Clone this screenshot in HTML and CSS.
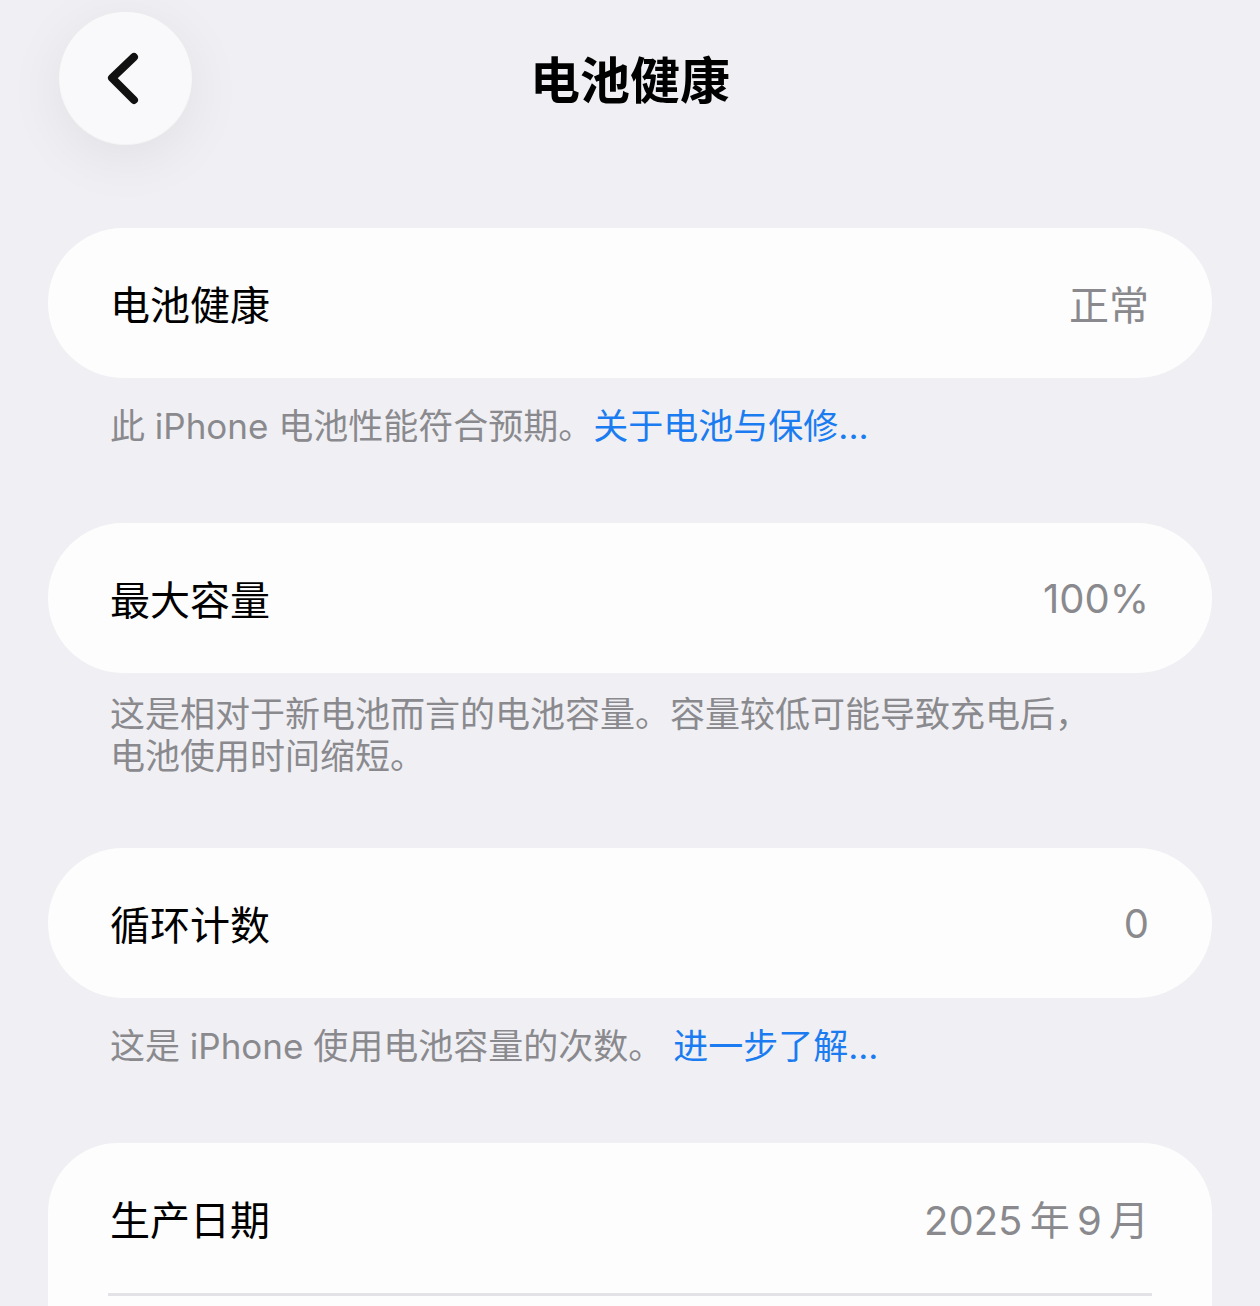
FILE: index.html
```html
<!DOCTYPE html>
<html lang="zh-CN">
<head>
<meta charset="UTF-8">
<meta name="viewport" content="width=device-width, initial-scale=1.0">
<title>电池健康</title>
<link rel="stylesheet" href="styles.css">
</head>
<body>

<div class="header">
  <button class="back" aria-label="返回">
    <svg width="40" height="58" viewBox="0 0 40 58">
      <path d="M32 7 L10 28 L32 50" fill="none" stroke="#111" stroke-width="8" stroke-linecap="round" stroke-linejoin="round"/>
    </svg>
  </button>
  <h1>电池健康</h1>
  <div class="spacer"></div>
</div>

<div class="group">
  <div class="card">
    <div class="row">
      <span class="label">电池健康</span>
      <span class="value">正常</span>
    </div>
  </div>
  <p class="footer">此 iPhone 电池性能符合预期。<a href="#">关于电池与保修...</a></p>
</div>

<div class="group">
  <div class="card">
    <div class="row">
      <span class="label">最大容量</span>
      <span class="value">100%</span>
    </div>
  </div>
  <p class="footer footer-multi">这是相对于新电池而言的电池容量。容量较低可能导致充电后，电池使用时间缩短。</p>
</div>

<div class="group">
  <div class="card">
    <div class="row">
      <span class="label">循环计数</span>
      <span class="value">0</span>
    </div>
  </div>
  <p class="footer">这是 iPhone 使用电池容量的次数。 <a href="#">进一步了解...</a></p>
</div>

<div class="group">
  <div class="card card-list">
    <div class="row">
      <span class="label">生产日期</span>
      <span class="value">2025&thinsp;年&thinsp;9&thinsp;月</span>
    </div>
    <div class="divider"></div>
    <div class="row"></div>
  </div>
</div>

</body>
</html>
```

FILE: styles.css
```css
body {
  font-family: Inter, "Noto Sans CJK SC", sans-serif;
  background-color: #f0f0f4;
  color: #000;
  margin: 0;
  padding: 0;
  overflow: hidden;
}
.header {
  display: flex;
  align-items: center;
  padding: 13px 60px 0 60px;
}
.back {
  width: 131px;
  height: 131px;
  border-radius: 50%;
  border: none;
  background-color: #f9f9fb;
  box-shadow: 0 12px 60px rgba(0, 0, 0, 0.07), 0 0 0 1px rgba(255, 255, 255, 0.9);
  display: flex;
  align-items: center;
  justify-content: center;
  padding: 0 8px 0 0;
  cursor: pointer;
}
.spacer {
  width: 131px;
}
h1 {
  flex: 1;
  margin: 0;
  padding-top: 4px;
  text-align: center;
  font-size: 50px;
  font-weight: 700;
  line-height: 60px;
}
.group {
  margin: 0 48px;
}
.header + .group {
  margin-top: 84px;
}
.card {
  background-color: #fdfdfd;
  border-radius: 75px;
}
.card-list {
  border-radius: 70px 70px 0 0;
}
.row {
  height: 150px;
  display: flex;
  align-items: center;
  justify-content: space-between;
  padding: 0 63px 0 62px;
  font-size: 40px;
}
.value {
  color: #8a8a8e;
}
.divider {
  height: 3px;
  margin: 0 60px;
  background-color: #e3e3e7;
}
.footer {
  margin: 27px 0 76px 0;
  padding: 0 100px 0 62px;
  font-size: 35px;
  line-height: 42px;
  color: #8a8a8e;
}
.footer-multi {
  margin: 20px 0 71px 0;
}
.footer a {
  color: #1a7cf0;
  text-decoration: none;
}
```
